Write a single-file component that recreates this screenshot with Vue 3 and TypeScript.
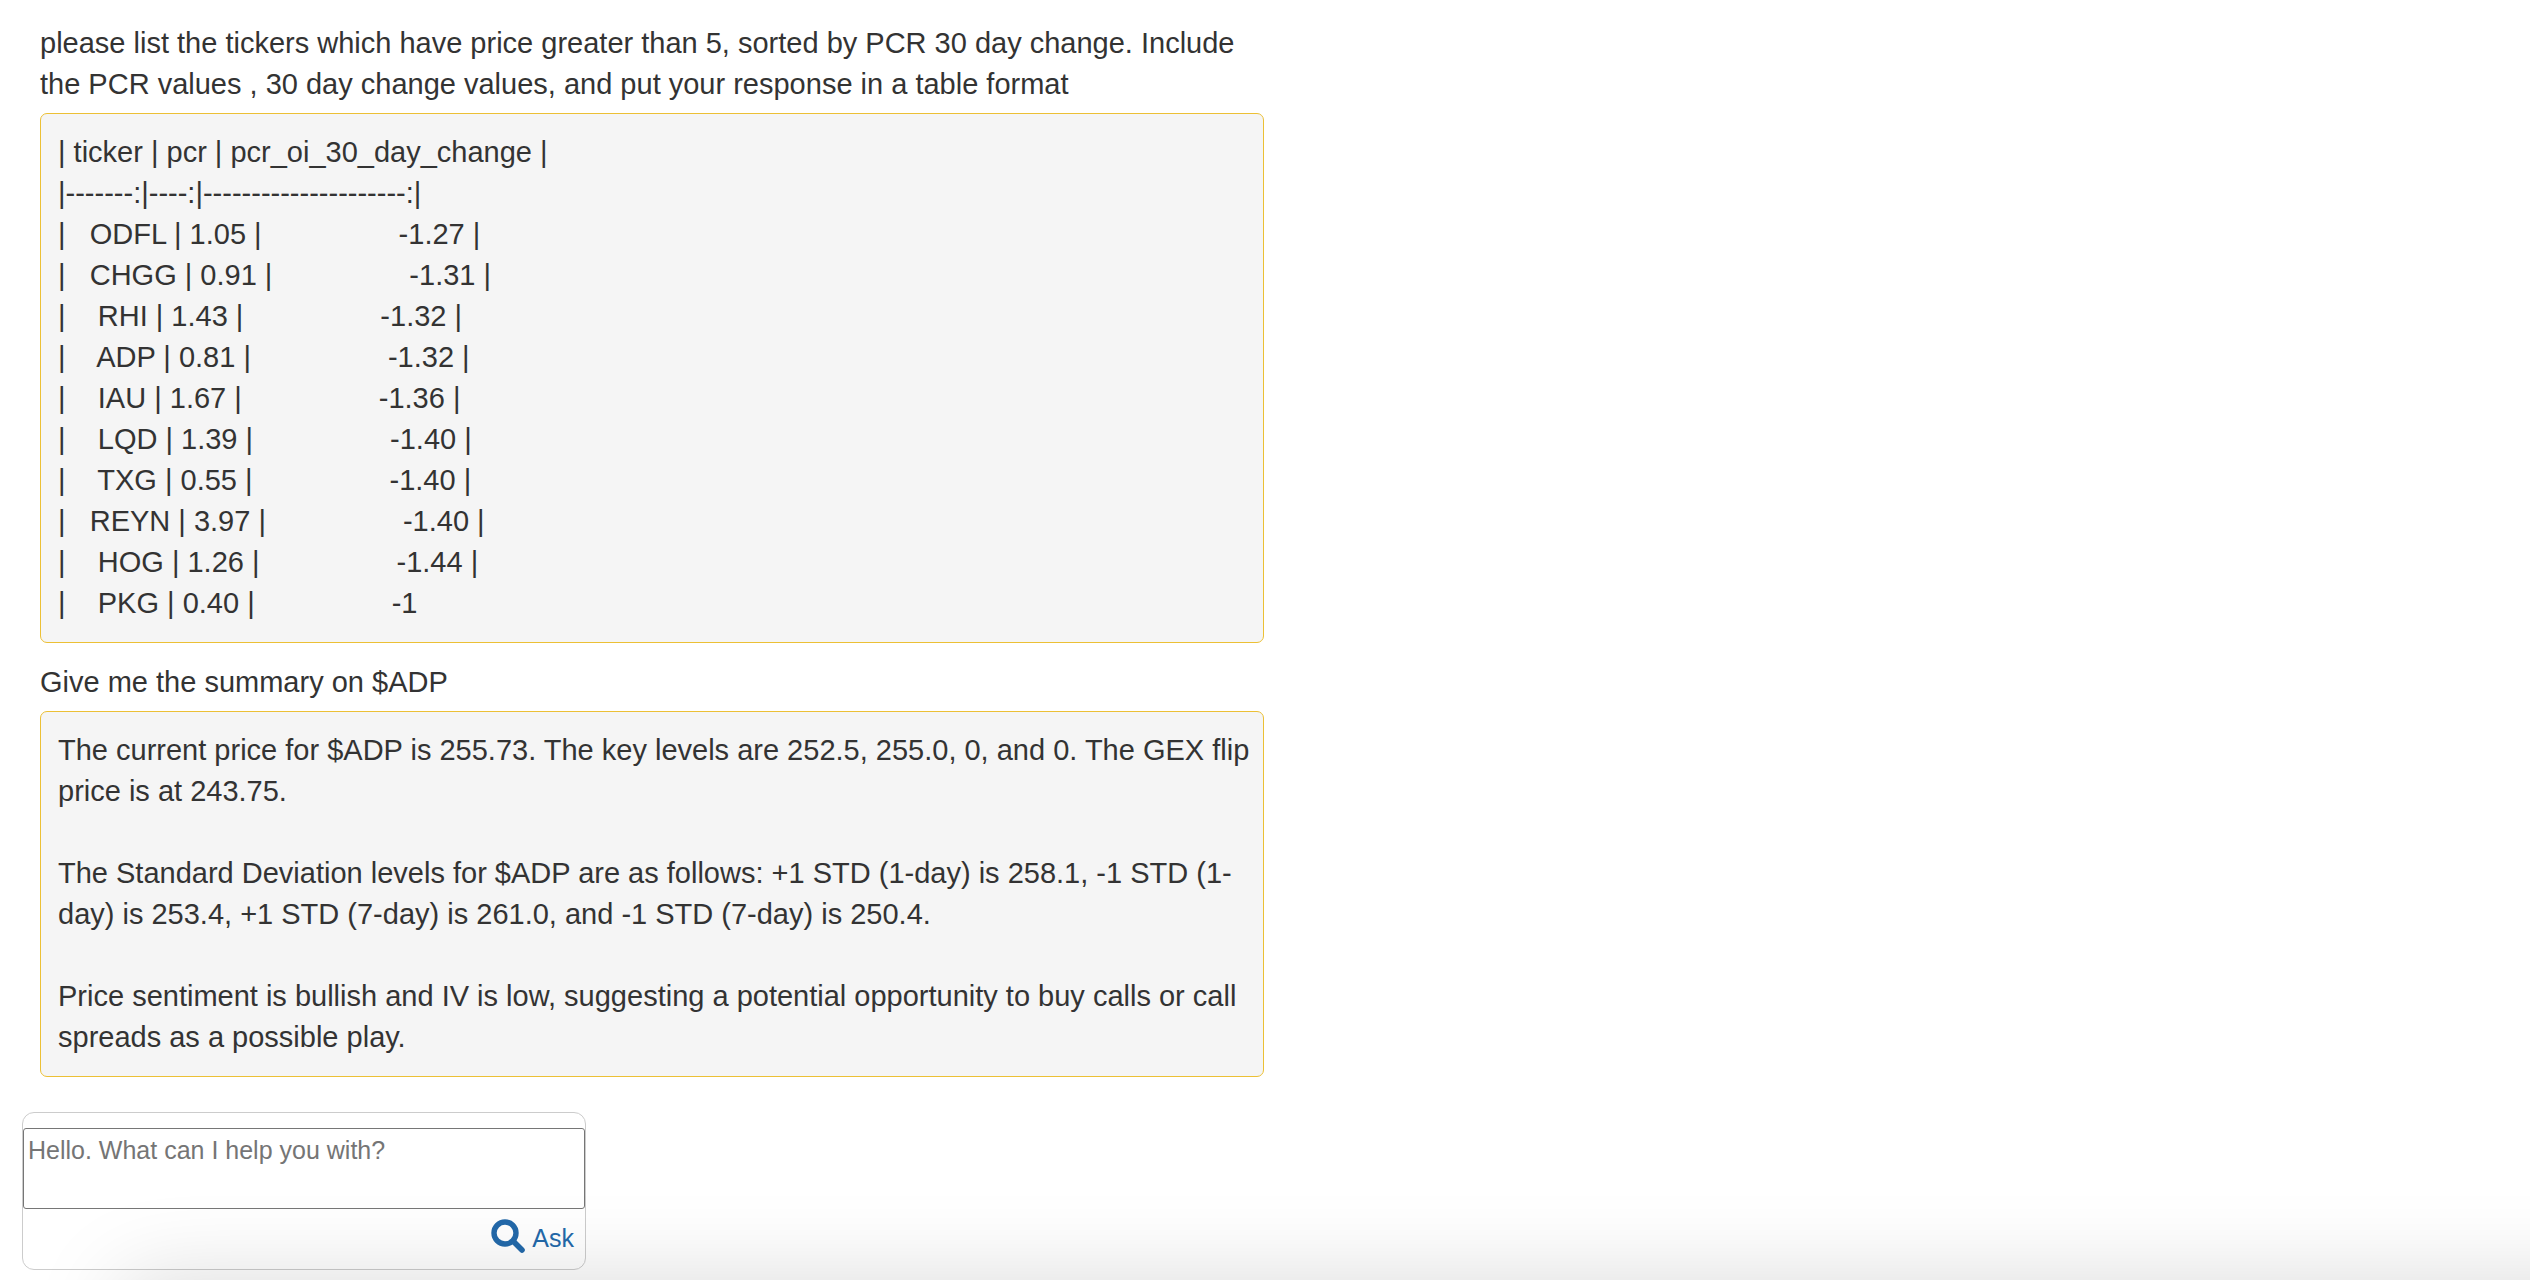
<script setup lang="ts">
import { ref } from 'vue'

interface Exchange {
  question: string
  answer: string
}

const gap = ' '.repeat(17)

const rows: [string, string, string][] = [
  ['   ODFL', '1.05', '-1.27 |'],
  ['   CHGG', '0.91', '-1.31 |'],
  ['    RHI', '1.43', '-1.32 |'],
  ['    ADP', '0.81', '-1.32 |'],
  ['    IAU', '1.67', '-1.36 |'],
  ['    LQD', '1.39', '-1.40 |'],
  ['    TXG', '0.55', '-1.40 |'],
  ['   REYN', '3.97', '-1.40 |'],
  ['    HOG', '1.26', '-1.44 |'],
  ['    PKG', '0.40', '-1'],
]

const exchanges: Exchange[] = [
  {
    question:
      'please list the tickers which have price greater than 5, sorted by PCR 30 day change. Include the PCR values , 30 day change values, and put your response in a table format',
    answer: [
      '| ticker | pcr | pcr_oi_30_day_change |',
      '|-------:|----:|---------------------:|',
      ...rows.map(([ticker, pcr, change]) => `|${ticker} | ${pcr} |${gap}${change}`),
    ].join('\n'),
  },
  {
    question: 'Give me the summary on $ADP',
    answer: [
      'The current price for $ADP is 255.73. The key levels are 252.5, 255.0, 0, and 0. The GEX flip price is at 243.75.',
      'The Standard Deviation levels for $ADP are as follows: +1 STD (1-day) is 258.1, -1 STD (1-day) is 253.4, +1 STD (7-day) is 261.0, and -1 STD (7-day) is 250.4.',
      'Price sentiment is bullish and IV is low, suggesting a potential opportunity to buy calls or call spreads as a possible play.',
    ].join('\n\n'),
  },
]

const prompt = ref('')
</script>

<template>
  <main class="chat">
    <section class="log">
      <article v-for="item in exchanges" :key="item.question" class="exchange">
        <p class="question">{{ item.question }}</p>
        <div class="answer">{{ item.answer }}</div>
      </article>
    </section>

    <form class="composer" @submit.prevent>
      <textarea
        v-model="prompt"
        class="prompt"
        aria-label="Question"
        placeholder="Hello. What can I help you with?"
      ></textarea>
      <button class="ask" type="submit">
        <svg class="ask-icon" viewBox="0 0 34 34" aria-hidden="true">
          <circle cx="14" cy="14" r="11" fill="none" stroke="currentColor" stroke-width="5.4" />
          <path d="M23 23 L31 31" fill="none" stroke="currentColor" stroke-width="5.6" stroke-linecap="round" />
        </svg>
        <span>Ask</span>
      </button>
    </form>

    <div class="edge-shade"></div>
  </main>
</template>

<style>
body {
  background: #fff;
}
</style>

<style scoped>
.chat {
  padding: 23px 0 10px;
  font-family: "Liberation Sans", Arial, Helvetica, sans-serif;
  font-size: 29px;
  line-height: 41px;
  color: #333;
}

.log {
  box-sizing: border-box;
  width: 50%;
  padding: 0 1px 0 40px;
  display: flex;
  flex-direction: column;
  gap: 19px;
}

.exchange {
  display: flex;
  flex-direction: column;
  gap: 8px;
}

.question {
  margin: 0;
}

.answer {
  padding: 18px 12px 18px 17px;
  border: 1px solid #ecc035;
  border-radius: 7px;
  background: #f5f5f5;
  white-space: pre-wrap;
}

.composer {
  box-sizing: border-box;
  width: 564px;
  max-width: 100%;
  margin: 35px 0 0 22px;
  padding: 15px 0 16px;
  border: 1px solid #ccc;
  border-radius: 12px;
  display: flex;
  flex-direction: column;
  gap: 10px;
}

.prompt {
  box-sizing: border-box;
  display: block;
  width: 100%;
  height: 81px;
  margin: 0;
  padding: 4px;
  border: 1px solid #767676;
  border-radius: 3px;
  background: #fff;
  color: #333;
  font: inherit;
  font-size: 25px;
  line-height: 34px;
  resize: none;
}

.prompt::placeholder {
  color: #757575;
  opacity: 1;
}

.ask {
  align-self: flex-end;
  display: flex;
  align-items: flex-end;
  gap: 7px;
  margin: 0;
  padding: 0 11px 0 0;
  border: 0;
  background: none;
  color: #2369aa;
  font: inherit;
  font-size: 25px;
  line-height: 30px;
  cursor: pointer;
}

.ask-icon {
  width: 34px;
  height: 34px;
}

/* Soft shadow rising from the bottom edge of the window */
.edge-shade {
  position: fixed;
  top: 100%;
  left: 120px;
  right: -200px;
  height: 200px;
  border-radius: 20px;
  box-shadow: 0 0 90px rgba(0, 0, 0, 0.15);
  pointer-events: none;
}
</style>
